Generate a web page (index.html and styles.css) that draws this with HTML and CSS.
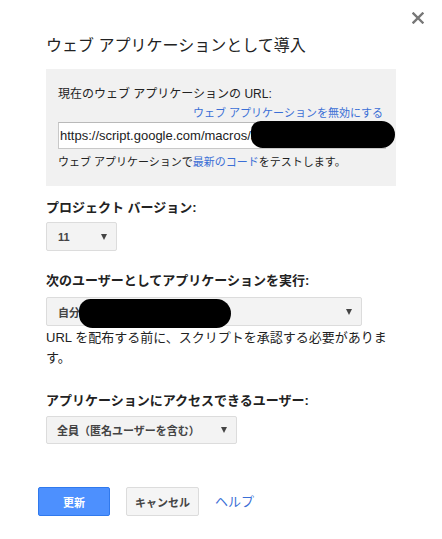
FILE: index.html
```html
<!DOCTYPE html>
<html lang="ja">
<head>
    <meta charset="UTF-8">
    <meta name="viewport" content="width=device-width, initial-scale=1.0">
    <title>ウェブ アプリケーションとして導入</title>
    <link rel="stylesheet" href="styles.css">
</head>
<body>
    <div class="dialog">
        <button class="close-btn" aria-label="閉じる">
            <svg viewBox="0 0 12 12" width="12" height="12">
                <path d="M1.5 1.5L10.5 10.5M10.5 1.5L1.5 10.5" stroke="#777" stroke-width="2.4" stroke-linecap="square"></path>
            </svg>
        </button>

        <h1 class="dialog-title">ウェブ アプリケーションとして導入</h1>

        <div class="url-box">
            <div class="url-label">現在のウェブ アプリケーションの URL:</div>
            <div class="url-disable"><a href="#">ウェブ アプリケーションを無効にする</a></div>
            <div class="url-input">
                https://script.google.com/macros/s
                <span class="redact redact-url"></span>
            </div>
            <div class="url-hint">ウェブ アプリケーションで<a href="#">最新のコード</a>をテストします。</div>
        </div>

        <div class="field-label">プロジェクト バージョン:</div>
        <div class="select select-version">
            <span>11</span>
            <span class="arrow"></span>
        </div>

        <div class="field-label label-exec">次のユーザーとしてアプリケーションを実行:</div>
        <div class="select select-exec">
            <span>自分</span>
            <span class="arrow"></span>
            <span class="redact redact-user"></span>
        </div>
        <p class="field-note">URL を配布する前に、スクリプトを承認する必要があります。</p>

        <div class="field-label label-access">アプリケーションにアクセスできるユーザー:</div>
        <div class="select select-access">
            <span>全員（匿名ユーザーを含む）</span>
            <span class="arrow"></span>
        </div>

        <div class="dialog-footer">
            <button class="btn btn-primary">更新</button>
            <button class="btn btn-default">キャンセル</button>
            <a href="#" class="help-link">ヘルプ</a>
        </div>
    </div>
</body>
</html>
```

FILE: styles.css
```css
*{margin:0;padding:0;box-sizing:border-box}
body{font-family:"Liberation Sans","Noto Sans CJK JP",sans-serif;background:#fff;color:#222}
a{color:#3b6fd6;text-decoration:none}

.dialog{position:relative;width:442px;padding:36px 46px 0 46px}
.close-btn{position:absolute;top:12px;right:18px;border:none;background:0 0;padding:0;cursor:pointer;display:flex}

.dialog-title{font-size:16px;line-height:20px;font-weight:400;margin-bottom:13px;color:#222}

.url-box{background:#f1f1f1;padding:17px 10px 16px 12px}
.url-label{font-size:12px;line-height:16px;color:#222}
.url-disable{font-size:11px;line-height:16px;margin-top:3px;text-align:right;padding-right:3px;width:328px}
.url-input{position:relative;margin-top:1px;width:328px;height:27px;background:#fff;border:1px solid #c8c8c8;border-top-color:#b9b9b9;padding-left:1px;font-size:13px;line-height:25px;color:#222;white-space:nowrap}
.url-hint{font-size:11px;line-height:16px;margin-top:5px;color:#222}

.redact{position:absolute;background:#000}
.redact-url{left:192px;top:-2px;width:144px;height:27px;border-radius:10px 14px 14px 12px}
.redact-user{left:32px;top:1px;width:152px;height:29px;border-radius:12px 15px 15px 14px}

.field-label{font-size:13px;line-height:17px;font-weight:700;margin-top:13px;color:#222}
.label-exec{margin-top:21px}
.label-access{margin-top:24px}

.select{position:relative;display:flex;justify-content:space-between;align-items:center;height:29px;margin-top:6px;padding:0 9px 0 11px;background:#f3f3f3;border:1px solid #dcdcdc;border-radius:2px;font-size:11px;font-weight:700;color:#444}
.select-version{width:71px}
.select-exec{width:316px;margin-top:8px}
.select-access{width:191px;height:28px;margin-top:7px;padding-left:10px}
.arrow{width:0;height:0;border-left:3.5px solid transparent;border-right:3.5px solid transparent;border-top:6px solid #444}

.field-note{font-size:13px;line-height:20px;margin-top:2px;color:#222}

.dialog-footer{display:flex;align-items:center;gap:16px;margin-top:43px;margin-left:-8px}
.btn{height:29px;border-radius:2px;font-family:inherit;font-size:11px;font-weight:700;cursor:pointer}
.btn-primary{width:72px;background:#4d90fe;border:1px solid #3079ed;color:#fff}
.btn-default{width:73px;background:#f5f5f5;border:1px solid #dcdcdc;color:#444}
.help-link{font-size:13px;line-height:17px}
```
